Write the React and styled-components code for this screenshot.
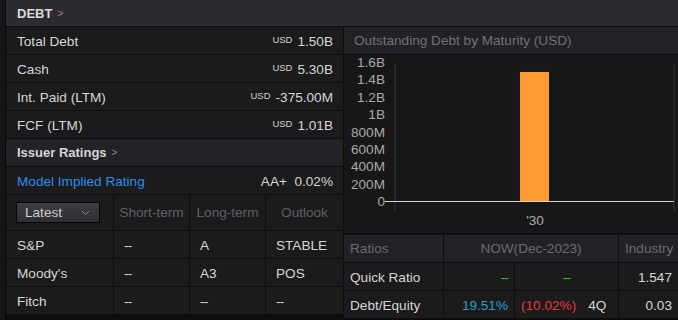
import React from "react";
import styled, { createGlobalStyle } from "styled-components";

const GlobalStyle = createGlobalStyle`
  html, body {
    margin: 0;
    padding: 0;
    background: #0d0d0d;
    font-family: "Liberation Sans", Arial, sans-serif;
  }
`;

const Page = styled.div`
  width: 678px;
  height: 320px;
  display: flex;
  overflow: hidden;
  background: #0d0d0d;
  color: #d6d6d6;
  font-size: 13.6px;
`;

const Gutter = styled.div`
  width: 5px;
  background: #151515;
  border-right: 1px solid #080808;
`;

const Main = styled.div`
  flex: 1;
  display: flex;
  flex-direction: column;
  gap: 1px;
  min-width: 0;
`;

const TopBar = styled.div`
  height: 26px;
  display: flex;
  align-items: center;
  padding-left: 11px;
  background: #2b2b30;
  font-weight: bold;
  font-size: 13px;
  color: #dadada;
`;

const Chevron = styled.span`
  color: #8a8a90;
  font-weight: normal;
  font-size: 10px;
  margin-left: 5px;
`;

const Body = styled.div`
  display: grid;
  grid-template-columns: 337px 1fr;
  gap: 1px;
  flex: 1;
`;

const Column = styled.div`
  display: flex;
  flex-direction: column;
  gap: 1px;
`;

const Row = styled.div`
  height: 27px;
  box-sizing: border-box;
  display: flex;
  align-items: center;
  justify-content: space-between;
  padding: 1px 10px 0 11px;
  background: ${(p) => p.$bg || "#1b1b1b"};
`;

const Value = styled.span`
  display: flex;
  align-items: baseline;
  gap: 5px;
`;

const Ccy = styled.span`
  font-size: 9.5px;
  color: #d0d0d0;
  position: relative;
  top: -3px;
`;

const SubHead = styled.div`
  height: 27px;
  display: flex;
  align-items: center;
  padding-left: 11px;
  background: #232327;
  font-weight: bold;
  font-size: 13px;
`;

const Link = styled.span`
  color: #2b8ff0;
`;

const RatingGrid = styled.div`
  display: grid;
  grid-template-columns: 107px 75px 75px 1fr;
  gap: 1px;
  background: #0d0d0d;
`;

const Cell = styled.div`
  height: ${(p) => (p.$head ? "35px" : "27px")};
  box-sizing: border-box;
  display: flex;
  align-items: center;
  justify-content: ${(p) => p.$align || "flex-start"};
  padding: ${(p) => p.$pad || "1px 10px 0"};
  background: #1b1b1b;
  color: ${(p) => p.$color || "#d6d6d6"};
  white-space: nowrap;
`;

const Dash = styled.span`
  letter-spacing: -0.8px;
  color: ${(p) => p.$color || "inherit"};
`;

const Select = styled.div`
  width: 84px;
  height: 21px;
  box-sizing: border-box;
  border: 1px solid #060606;
  background: linear-gradient(#3c3c41, #2e2e33);
  display: flex;
  align-items: center;
  justify-content: space-between;
  padding: 0 9px 0 8px;
  color: #cacaca;
`;

const ChartPanel = styled.div`
  display: flex;
  flex-direction: column;
  background: #171717;
  height: 206px;
`;

const ChartTitle = styled.div`
  height: 27px;
  display: flex;
  align-items: center;
  padding-left: 10px;
  background: #222226;
  color: #70707a;
  border-bottom: 1px solid #0d0d0d;
`;

const Ratios = styled.div`
  margin-top: 1px;
  display: grid;
  grid-template-columns: 99px 70px 103px 1fr;
  gap: 1px;
  background: #0d0d0d;
`;

const RCell = styled.div`
  grid-column: ${(p) => p.$span || "auto"};
  height: 27px;
  box-sizing: border-box;
  display: flex;
  align-items: center;
  justify-content: ${(p) => p.$align || "flex-start"};
  gap: ${(p) => p.$gap || "0"};
  padding: ${(p) => (p.$head ? "0 6px" : "1px 6px 0")};
  background: ${(p) => (p.$head ? "#222226" : "#1b1b1b")};
  color: ${(p) => p.$color || "#d6d6d6"};
  white-space: nowrap;
  overflow: hidden;
`;

const debtRows = [
  ["Total Debt", "1.50B"],
  ["Cash", "5.30B"],
  ["Int. Paid (LTM)", "-375.00M"],
  ["FCF (LTM)", "1.01B"],
];

const ratings = [
  ["S&P", "--", "A", "STABLE"],
  ["Moody's", "--", "A3", "POS"],
  ["Fitch", "--", "--", "--"],
];

const ticks = ["1.6B", "1.4B", "1.2B", "1B", "800M", "600M", "400M", "200M", "0"];

function Chart() {
  const step = 139 / 8;
  return (
    <svg width="334" height="178" style={{ display: "block" }}>
      <line x1="51" y1="8" x2="51" y2="156" stroke="#363636" />
      <line x1="330" y1="8" x2="330" y2="156" stroke="#363636" />
      {ticks.map((t, i) => (
        <text
          key={t}
          x="41"
          y={7 + i * step + 5}
          textAnchor="end"
          fontSize="13.6"
          fill="#a9a9a9"
          fontFamily="Liberation Sans, Arial, sans-serif"
        >
          {t}
        </text>
      ))}
      <rect x="176" y="17" width="29" height="129" fill="#ff9a33" />
      <line x1="41" y1="146.5" x2="330" y2="146.5" stroke="#d4d4d4" />
      <text
        x="191"
        y="170"
        textAnchor="middle"
        fontSize="13.6"
        fill="#a9a9a9"
        fontFamily="Liberation Sans, Arial, sans-serif"
      >
        '30
      </text>
    </svg>
  );
}

export default function App() {
  return (
    <>
      <GlobalStyle />
      <Page>
        <Gutter />
        <Main>
          <TopBar>
            DEBT<Chevron>&gt;</Chevron>
          </TopBar>
          <Body>
            <Column>
              {debtRows.map(([label, v]) => (
                <Row key={label}>
                  <span>{label}</span>
                  <Value>
                    <Ccy>USD</Ccy>
                    {v}
                  </Value>
                </Row>
              ))}
              <SubHead>
                Issuer Ratings<Chevron>&gt;</Chevron>
              </SubHead>
              <Row>
                <Link>Model Implied Rating</Link>
                <span>AA+&nbsp;&nbsp;0.02%</span>
              </Row>
              <RatingGrid>
                <Cell $head $pad="0 0 0 10px">
                  <Select>
                    Latest
                    <svg width="9" height="6" viewBox="0 0 9 6">
                      <path d="M1 1l3.5 3.5L8 1" fill="none" stroke="#8a8a90" strokeWidth="1" />
                    </svg>
                  </Select>
                </Cell>
                <Cell $head $align="center" $pad="0" $color="#5f5f66">Short-term</Cell>
                <Cell $head $align="center" $pad="0" $color="#5f5f66">Long-term</Cell>
                <Cell $head $align="center" $pad="0" $color="#5f5f66">Outlook</Cell>
                {ratings.map((r) =>
                  r.map((c, i) => (
                    <Cell key={r[0] + i} $pad={i === 0 ? "1px 11px 0" : "1px 10px 0"}>
                      {c === "--" ? <Dash>{c}</Dash> : c}
                    </Cell>
                  ))
                )}
              </RatingGrid>
            </Column>
            <Column>
              <ChartPanel>
                <ChartTitle>Outstanding Debt by Maturity (USD)</ChartTitle>
                <Chart />
              </ChartPanel>
              <Ratios>
                <RCell $head $color="#6a6a70">Ratios</RCell>
                <RCell $head $span="span 2" $align="center" $color="#6a6a70">NOW(Dec-2023)</RCell>
                <RCell $head $color="#6a6a70">Industry</RCell>
                <RCell>Quick Ratio</RCell>
                <RCell $align="flex-end"><Dash $color="#3dc13d">--</Dash></RCell>
                <RCell $align="center"><Dash $color="#3dc13d">--</Dash></RCell>
                <RCell $align="flex-end">1.547</RCell>
                <RCell>Debt/Equity</RCell>
                <RCell $align="flex-end" $color="#2a9fd6">19.51%</RCell>
                <RCell $gap="12px">
                  <span style={{ color: "#e8393f" }}>(10.02%)</span>
                  <span>4Q</span>
                </RCell>
                <RCell $align="flex-end">0.03</RCell>
              </Ratios>
            </Column>
          </Body>
        </Main>
      </Page>
    </>
  );
}
